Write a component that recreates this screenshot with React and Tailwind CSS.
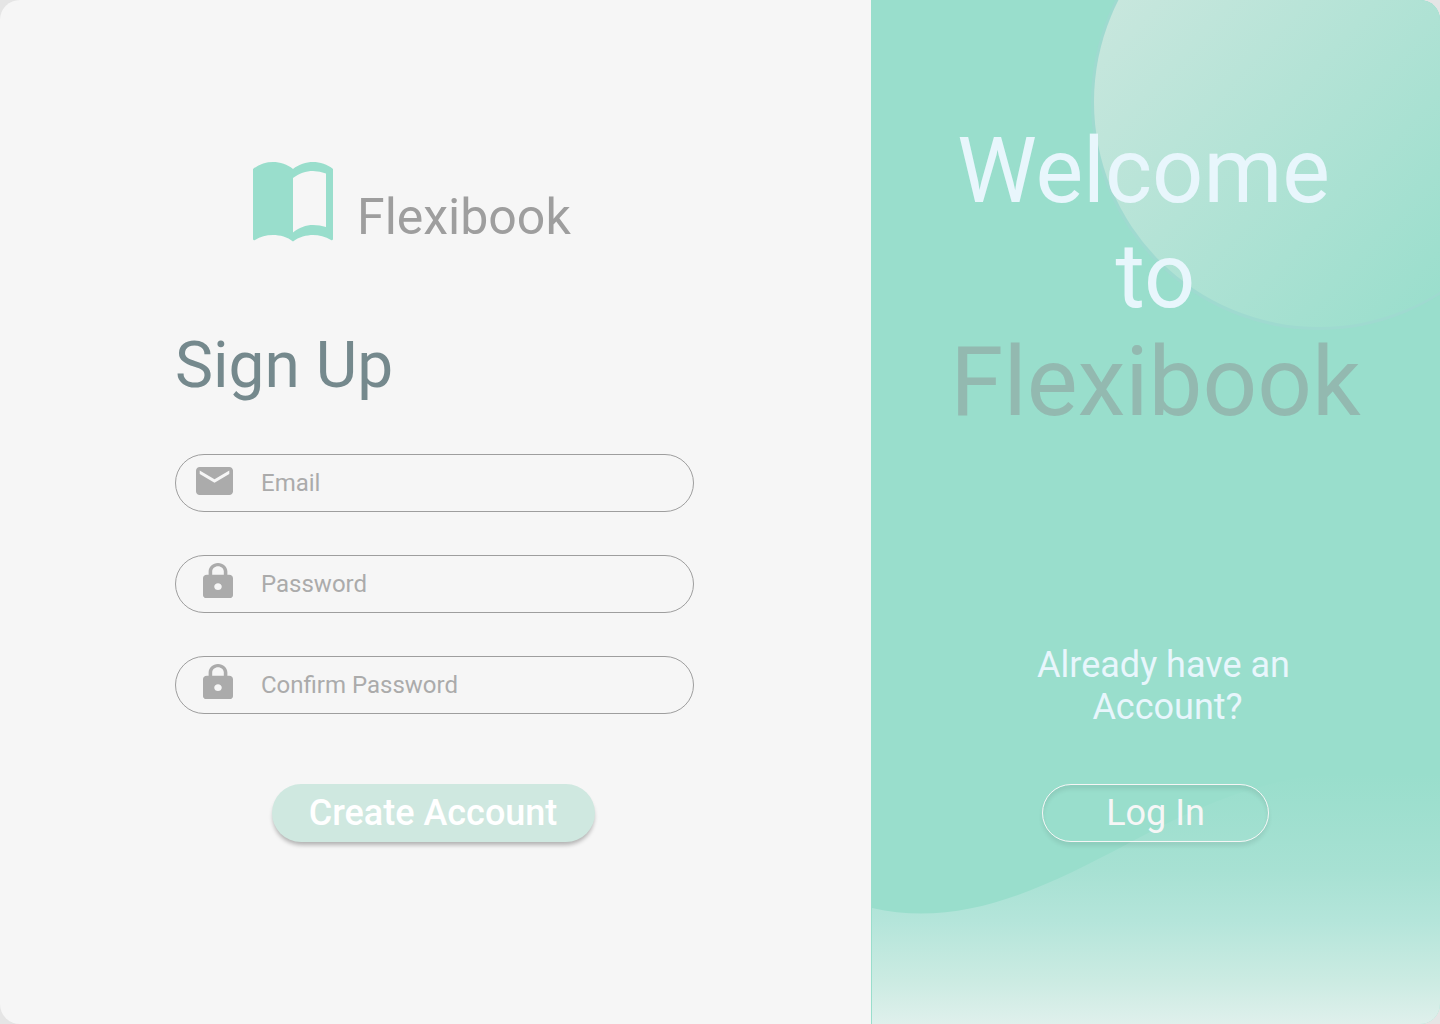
import React from "react";

const MAIL =
  "M20 4H4c-1.1 0-1.99.9-1.99 2L2 18c0 1.1.9 2 2 2h16c1.1 0 2-.9 2-2V6c0-1.1-.9-2-2-2zm0 4l-8 5-8-5V6l8 5 8-5v2z";
const LOCK =
  "M18 8h-1V6c0-2.76-2.24-5-5-5S7 3.24 7 6v2H6c-1.1 0-2 .9-2 2v10c0 1.1.9 2 2 2h12c1.1 0 2-.9 2-2V10c0-1.1-.9-2-2-2zm-6 9c-1.1 0-2-.9-2-2s.9-2 2-2 2 .9 2 2-.9 2-2 2zm3.1-9H8.9V6c0-1.71 1.39-3.1 3.1-3.1s3.1 1.39 3.1 3.1v2z";

function MailIcon() {
  return (
    <svg className="mb-1 ml-5 h-7 w-[37px]" viewBox="2 4 20 16" preserveAspectRatio="none" fill="#ababab">
      <path d={MAIL} />
    </svg>
  );
}

function LockIcon() {
  return (
    <svg className="mb-[7.5px] ml-[27px] h-[35.5px] w-[30px]" viewBox="4 1 16 21" preserveAspectRatio="none" fill="#ababab">
      <path d={LOCK} />
    </svg>
  );
}

function BookLogo() {
  return (
    <svg className="h-20 w-20 shrink-0" viewBox="0 0 80 80" fill="#99decc">
      <path
        fillRule="evenodd"
        d="M0 7C6 2.200 13 0 20 0s14.500 2.200 20 7C46 2.200 53 0 60 0s14.500 2.200 20 7V77.200q-.6 1.500-2 .7C72.500 74.500 66 73 60 73s-14.500 2-20 6.500C34.500 75 27 73 20 73S7.500 74.500 2 77.900q-1.400.8-2-.7zM40 16V70.500C46 65.500 53 63 60 63q7 0 13 2V11.500Q67 9 60 9C53 9 46 11.500 40 16z"
      />
    </svg>
  );
}

function Field({ icon, label }) {
  return (
    <label className="flex h-[58px] w-[519px] items-center rounded-full border border-[#9e9e9e]">
      <span className="flex w-[85px] items-center">{icon}</span>
      <span className="text-2xl text-[#ababab]">{label}</span>
    </label>
  );
}

export default function App() {
  return (
    <div className="h-[1024px] w-[1440px] bg-[#e5e5e5] font-['Roboto',sans-serif]">
      <main className="flex h-full overflow-hidden rounded-[20px] bg-[#f6f6f6]">
        <section className="flex w-[871px] flex-col pl-[175px] pt-[162px]">
          <div className="flex h-[85px] items-start pl-[78px]">
            <BookLogo />
            <span className="ml-6 mt-[25px] text-[50px] leading-[60px] text-[#9e9e9e]">Flexibook</span>
          </div>
          <h1 className="mt-[81px] text-[64px] leading-[76px] text-[#75898d]">Sign Up</h1>
          <form className="mt-[50px] flex flex-col gap-[43px]">
            <Field icon={<MailIcon />} label="Email" />
            <Field icon={<LockIcon />} label="Password" />
            <Field icon={<LockIcon />} label="Confirm Password" />
            <button
              type="button"
              className="ml-[97px] mt-[27px] h-[58px] w-[323px] rounded-full bg-[#cfe8e0] pr-px text-4xl font-medium text-white shadow-[0_4px_4px_-1px_rgba(0,0,0,0.28)]"
            >
              Create Account
            </button>
          </form>
        </section>

        <aside className="relative flex-1 overflow-hidden bg-[#99decc]">
          <svg className="absolute inset-0 h-full w-full" viewBox="0 0 569 1024">
            <defs>
              <linearGradient id="orb" gradientUnits="userSpaceOnUse" x1="200" y1="-60" x2="590" y2="300">
                <stop offset="0" stopColor="#cfe8e0" />
                <stop offset="1" stopColor="#99decc" />
              </linearGradient>
              <linearGradient id="wave" gradientUnits="userSpaceOnUse" x1="0" y1="774" x2="0" y2="1024">
                <stop offset="0" stopColor="#99decc" />
                <stop offset="0.384" stopColor="#a7e1d3" />
                <stop offset="0.584" stopColor="#b4e5da" />
                <stop offset="0.824" stopColor="#cbebe2" />
                <stop offset="1" stopColor="#dff0ec" />
              </linearGradient>
            </defs>
            <circle cx="447.5" cy="102.5" r="227.5" fill="#9fdad0" />
            <circle cx="448" cy="102" r="225" fill="url(#orb)" />
            <path d="M1 908C90 928 170 890 258 843C350 794 430 760 569 774V1024H1Z" fill="url(#wave)" />
          </svg>
          <div className="relative flex flex-col items-center pt-[119px]">
            <h2 className="flex flex-col items-center text-[90px] leading-[105px] text-[#e8f6fc]">
              <span className="-ml-6">Welcome</span>
              <span>to</span>
            </h2>
            <p className="-mt-[3px] text-[96px] leading-[112px] text-[#93b9b0]">Flexibook</p>
            <p className="mt-[206px] flex flex-col items-center text-4xl leading-[42px] text-[#e8f6fc]">
              <span className="ml-4">Already have an</span>
              <span className="ml-6">Account?</span>
            </p>
            <button
              type="button"
              className="mt-14 h-[58px] w-[227px] rounded-full border border-[#f6f6f6] text-4xl text-[#f6f6f6] shadow-[0_4px_4px_rgba(0,0,0,0.08),inset_0_4px_4px_rgba(0,0,0,0.08)]"
            >
              Log In
            </button>
          </div>
        </aside>
      </main>
    </div>
  );
}
